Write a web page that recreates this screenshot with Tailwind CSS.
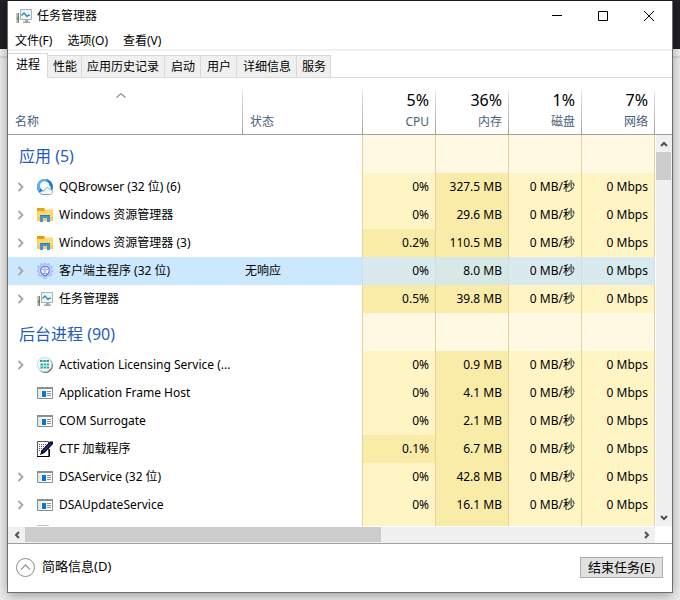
<!DOCTYPE html>
<html lang="zh-CN">
<head>
  <meta charset="UTF-8">
  <meta name="viewport" content="width=device-width, initial-scale=1.0">
  <title>任务管理器</title>
  <script src="https://cdn.jsdelivr.net/npm/@tailwindcss/browser@4"></script>
</head>
<body class="h-screen overflow-hidden px-[7px] pt-px pb-[7px] text-xs text-black font-['Noto_Sans','Noto_Sans_CJK_SC',sans-serif] bg-[linear-gradient(to_bottom,#201f25_49px,#f3f3f3_49px,#f3f3f3_56px,#dcdcdc_56px,#dcdcdc_58px,#efefef_58px)]">

  <!-- icons -->
  <svg class="hidden">
    <symbol id="i-taskmgr" viewBox="0 0 16 16">
      <path d="M0 5h3v10H0z" fill="#c4c4c4"/>
      <path d="M2 5h1v10H2z" fill="#777"/>
      <path d="M1 9h1v3H1z" fill="#58a55c"/>
      <path d="M4.500 1.500h11v10h-11z" fill="#fff" stroke="#a6a9ab"/>
      <path d="M5 2h10v9H5z" fill="none" stroke="#c9cccd" stroke-width=".5"/>
      <path d="M6 3h8v7H6z" fill="#e8f6fd"/>
      <path d="M5.500 7.500L8 5l3 3.500L12.500 7l1.500.500" fill="none" stroke="#2588bd" stroke-width="1.200"/>
      <path d="M9 12h3v1.500h2V15H7v-1.500h2z" fill="#a2a5a8"/>
    </symbol>
    <symbol id="i-qq" viewBox="0 0 16 16">
      <circle cx="8" cy="8" r="8" fill="#1d7bd6"/>
      <path d="M0 8A8 8 0 0 1 12 1C8 1.500 4 4 2.500 12.500A8 8 0 0 1 0 8z" fill="#58b2f4"/>
      <path d="M4 10a4.800 4.800 0 1 1 8.500-3.500c1 .5 1.500 2 1.200 3.500L8 13z" fill="#fff"/>
      <path d="M2.500 13.500c1.500-.500 3-2.500 4.800-1.500C8 8.500 11 7.500 12.500 10c2 0 3.300 1.500 3 3.500-.5 1.500-1.500 2-3 2H7c-2 0-3.500-.5-4.500-2z" fill="#f4f9fe" stroke="#7792b8" stroke-width=".8"/>
    </symbol>
    <symbol id="i-explorer" viewBox="0 0 16 16">
      <path d="M0 1h7l1.500 1.500H16V14H0z" fill="#ffd76a"/>
      <path d="M0 1h7l1 1.500-1.500 1.500H0z" fill="#e5a00d"/>
      <path d="M0 10h16v4H0z" fill="#fcc84c"/>
      <path d="M3 15V8h10v7h-3v-4H6v4z" fill="#3a96dd"/>
      <path d="M3 8h10v1H3z" fill="#2f78c4"/>
    </symbol>
    <symbol id="i-client" viewBox="0 0 16 16">
      <path d="M8 0l1.300 2L12 .5l.3 2.700 3 .3-1.500 2.500L16 8l-2.300 1.500.8 3-3 .2L10 14.500 8 16l-2-1.500-1.500-1.800-3-.2.8-3L0 8l2.200-2L.7 3.500l3-.3L4 .5 6.700 2z" fill="#c9d6fa" stroke="#8ea2ee" stroke-width=".7"/>
      <path d="M8 3.300c3 0 4.500 2 4.300 4.300-.2 2-2 4.400-4.300 5.400-2.300-1-4.100-3.400-4.300-5.400C3.500 5.300 5 3.300 8 3.300z" fill="#f2f6ff" stroke="#5c70e2" stroke-width="1.100"/>
      <path d="M5 6l2.200 1.200M11 6L8.800 7.200M8 4v5.500M6 10.500h4" fill="none" stroke="#7488ea" stroke-width=".9"/>
    </symbol>
    <symbol id="i-license" viewBox="0 0 16 16">
      <circle cx="8.400" cy="8.400" r="7.500" fill="#5f6676"/>
      <circle cx="7.600" cy="7.600" r="7.200" fill="#f8f9fc" stroke="#c3c8d4" stroke-width=".8"/>
      <path d="M3 4h9" stroke="#2aa39a" stroke-width="2" stroke-dasharray="2.600 .6"/>
      <path d="M4 7.500h8M4 10.500h8" stroke="#2aa39a" stroke-width="2" stroke-dasharray="2.200 .7"/>
      <path d="M3.500 6v6M6.500 9h5.500" stroke="#a9d5d2" stroke-width="1"/>
    </symbol>
    <symbol id="i-app" viewBox="0 0 16 16">
      <path d="M.5 2.500h15v11H.5z" fill="#fff" stroke="#8a8f94"/>
      <path d="M0 2h16v2H0z" fill="#8a8f94"/>
      <path d="M1 4h3v9H1z" fill="#e8e8e8"/>
      <path d="M5 6h4v6H5z" fill="#0078d7"/>
      <path d="M10 6.500h4M10 8.500h4M10 10.500h4" stroke="#8a8f94"/>
    </symbol>
    <symbol id="i-ctf" viewBox="0 0 16 16">
      <path d="M.5.500h11v15H.5z" fill="#fff" stroke="#555"/>
      <path d="M0 15.500h12.500V8" fill="none" stroke="#000"/>
      <path d="M2 3.500h8M2 5.500h7M2 7.500h5M2 9.500h3" stroke="#555" stroke-dasharray="1 1"/>
      <path d="M3 14l1.500-4.500L13 .5h3V3l-8.500 9z" fill="#000"/>
      <path d="M6 10.500L14.500 2" stroke="#1a2fd0" stroke-width="1.600"/>
    </symbol>
    <symbol id="i-blank" viewBox="0 0 16 16">
      <path d="M.5.500h11v15H.5z" fill="#fff" stroke="#c0c0c0"/>
    </symbol>
    <symbol id="i-right" viewBox="0 0 8 10">
      <path d="M1.500 1l4 4-4 4" fill="none" stroke="#a6a6a6" stroke-width="1.800"/>
    </symbol>
  </svg>

  <main class="flex h-full flex-col border border-t-0 border-[#6e6e6e] bg-white shadow-[0_3px_12px_rgba(0,0,0,0.35)]">
    <header class="flex h-[30px] shrink-0 items-center pl-2">
      <svg class="size-4"><use href="#i-taskmgr"/></svg>
      <h1 class="ml-[5px] grow">任务管理器</h1>
      <button class="flex h-full w-[46px] items-center justify-center" aria-label="最小化">
        <svg class="size-[10px]" viewBox="0 0 10 10"><path d="M0 4.500h10" stroke="#000"/></svg>
      </button>
      <button class="flex h-full w-[46px] items-center justify-center" aria-label="最大化">
        <svg class="size-[10px]" viewBox="0 0 10 10"><path d="M.5.500h9v9h-9z" fill="none" stroke="#000"/></svg>
      </button>
      <button class="flex h-full w-[46px] items-center justify-center" aria-label="关闭">
        <svg class="size-[10px]" viewBox="0 0 10 10"><path d="M0 0l10 10M10 0L0 10" stroke="#000"/></svg>
      </button>
    </header>

    <nav class="flex h-5 shrink-0 items-end gap-px border-b-2 border-[#f0f0f0]">
      <button class="px-[7px]">文件(F)</button>
      <button class="px-[7px]">选项(O)</button>
      <button class="px-[7px]">查看(V)</button>
    </nav>

    <div class="flex h-[27px] shrink-0 items-end" role="tablist">
      <button role="tab" aria-selected="true" class="h-[25px] border-t border-r border-[#d9d9d9] pr-[7px] pb-[2px] pl-2">进程</button>
      <button role="tab" class="h-[23px] border-y border-r border-[#d9d9d9] bg-[#f0f0f0] pr-1 pl-[5px]">性能</button>
      <button role="tab" class="h-[23px] border-y border-r border-[#d9d9d9] bg-[#f0f0f0] px-[5px]">应用历史记录</button>
      <button role="tab" class="h-[23px] border-y border-r border-[#d9d9d9] bg-[#f0f0f0] pr-[5px] pl-[6px]">启动</button>
      <button role="tab" class="h-[23px] border-y border-r border-[#d9d9d9] bg-[#f0f0f0] pr-[5px] pl-[6px]">用户</button>
      <button role="tab" class="h-[23px] border-y border-r border-[#d9d9d9] bg-[#f0f0f0] pr-[5px] pl-[6px]">详细信息</button>
      <button role="tab" class="h-[23px] border-y border-r border-[#d9d9d9] bg-[#f0f0f0] pr-1 pl-[5px]">服务</button>
      <div class="grow border-b border-[#d9d9d9]"></div>
    </div>

    <div class="flex min-h-0 grow">
      <div class="min-w-0 grow overflow-hidden">
        <table class="w-full table-fixed border-separate border-spacing-0">
          <colgroup>
            <col>
            <col class="w-[120px]">
            <col class="w-[73px]">
            <col class="w-[73px]">
            <col class="w-[73px]">
            <col class="w-[73px]">
          </colgroup>
          <thead class="text-[#4c607a]">
            <tr id="head"></tr>
          </thead>
          <tbody id="rows"></tbody>
        </table>
      </div>
      <div class="flex w-[17px] shrink-0 flex-col">
        <div class="h-[57px] shrink-0 border-b border-[#a0a0a0]"></div>
        <div class="ml-px flex grow flex-col bg-[#f0f0f0]">
          <button class="flex h-[17px] items-center justify-center" aria-label="向上滚动">
            <svg class="h-[6px] w-2" viewBox="0 0 8 6"><path d="M1 5l3-3 3 3" fill="none" stroke="#505050" stroke-width="2"/></svg>
          </button>
          <div class="mr-px h-7 bg-[#cdcdcd]"></div>
          <div class="grow"></div>
          <button class="flex h-[17px] items-center justify-center" aria-label="向下滚动">
            <svg class="h-[6px] w-2" viewBox="0 0 8 6"><path d="M1 1l3 3 3-3" fill="none" stroke="#505050" stroke-width="2"/></svg>
          </button>
        </div>
      </div>
    </div>

    <div class="mt-px mr-[17px] flex h-4 shrink-0 bg-[#f0f0f0]">
      <button class="flex w-[17px] items-center justify-center" aria-label="向左滚动">
        <svg class="h-2 w-[6px]" viewBox="0 0 6 8"><path d="M5 1L2 4l3 3" fill="none" stroke="#505050" stroke-width="2"/></svg>
      </button>
      <div class="mb-px w-[55%] bg-[#cdcdcd]"></div>
      <div class="grow"></div>
      <button class="flex w-[17px] items-center justify-center" aria-label="向右滚动">
        <svg class="h-2 w-[6px]" viewBox="0 0 6 8"><path d="M1 1l3 3-3 3" fill="none" stroke="#505050" stroke-width="2"/></svg>
      </button>
    </div>

    <footer class="flex h-[49px] shrink-0 items-center justify-between border-t border-[#a0a0a0] pr-[9px] pb-[2px] pl-2 text-[13px]">
      <button class="flex items-center gap-[7px]">
        <svg class="size-[19px]" viewBox="0 0 19 19" fill="none"><circle cx="9.500" cy="9.500" r="9" stroke="#8c8c8c"/><path d="M5 11.500l4.500-4.500 4.500 4.500" stroke="#a0a0a0" stroke-width="1.500"/></svg>
        简略信息(D)
      </button>
      <button class="h-[21px] border border-[#adadad] bg-[#e1e1e1] px-[7px] leading-[19px]">结束任务(E)</button>
    </footer>
  </main>

  <script>
    const columns = [
      { name: '名称', sort: true },
      { name: '状态' },
      { name: 'CPU', total: '5%' },
      { name: '内存', total: '36%' },
      { name: '磁盘', total: '1%' },
      { name: '网络', total: '7%' }
    ];

    const groups = [
      { title: '应用 (5)', rows: [
        { icon: 'qq', name: 'QQBrowser (32 位) (6)', cpu: '0%', mem: '327.5 MB', open: true },
        { icon: 'explorer', name: 'Windows 资源管理器', cpu: '0%', mem: '29.6 MB', open: true },
        { icon: 'explorer', name: 'Windows 资源管理器 (3)', cpu: '0.2%', mem: '110.5 MB', open: true },
        { icon: 'client', name: '客户端主程序 (32 位)', status: '无响应', cpu: '0%', mem: '8.0 MB', open: true, selected: true },
        { icon: 'taskmgr', name: '任务管理器', cpu: '0.5%', mem: '39.8 MB', open: true }
      ] },
      { title: '后台进程 (90)', rows: [
        { icon: 'license', name: 'Activation Licensing Service (...', cpu: '0%', mem: '0.9 MB', open: true },
        { icon: 'app', name: 'Application Frame Host', cpu: '0%', mem: '4.1 MB' },
        { icon: 'app', name: 'COM Surrogate', cpu: '0%', mem: '2.1 MB' },
        { icon: 'ctf', name: 'CTF 加载程序', cpu: '0.1%', mem: '6.7 MB' },
        { icon: 'app', name: 'DSAService (32 位)', cpu: '0%', mem: '42.8 MB', open: true },
        { icon: 'app', name: 'DSAUpdateService', cpu: '0%', mem: '16.1 MB', open: true },
        { icon: 'blank', name: '', cpu: '', mem: '', empty: true }
      ] }
    ];

    const line = '<span class="h-[43px] w-px bg-linear-to-b from-[#e6e6e6] to-[#a0a0a0]"></span>';

    document.getElementById('head').innerHTML = columns.map(c => {
      let body;
      if (c.total) {
        body = `<span class="flex grow flex-col pr-[6px] text-right"><span class="text-base leading-5 text-black">${c.total}</span><span class="pt-1 pb-1 leading-4">${c.name}</span></span>`;
      } else {
        const arrow = c.sort ? '<svg class="mx-auto mb-4 h-[5px] w-[10px]" viewBox="0 0 10 5"><path d="M.5 4.500L5 .800l4.500 3.700" fill="none" stroke="#7f8fa6" stroke-width="1.200"/></svg>' : '';
        body = `<span class="grow pr-4 pb-1 pl-[7px] text-left leading-4">${arrow}${c.name}</span>`;
      }
      return `<th class="h-[57px] border-b border-[#a0a0a0] p-0 align-bottom font-normal"><div class="flex items-end">${body}${line}</div></th>`;
    }).join('');

    function groupRow(g) {
      const cell = '<td class="border-r border-[#e6d29a] bg-[#fff9e4]"></td>';
      return `<tr class="h-[38px]">
        <td colspan="2" class="border-r border-[#e6d29a] py-0 pr-0 pl-[11px] text-base leading-5 text-[#1f5bbf]"><div class="pt-1">${g.title}</div></td>
        ${cell.repeat(4)}
      </tr>`;
    }

    function processRow(r) {
      let low = 'border-r border-[#e6d29a] bg-[#fff4c4] py-0 pr-[6px] pl-0 text-right';
      let high = 'border-r border-[#e6d29a] bg-[#f9eca8] py-0 pr-[6px] pl-0 text-right';
      let edge = 'border-r border-[#e6d29a] py-0 pr-0 pl-[2px]';
      if (r.selected) {
        low = 'border-r border-[#d5dde0] bg-[#d9eaee] py-0 pr-[6px] pl-0 text-right';
        high = 'border-r border-[#d5dde0] bg-[#d6e9e6] py-0 pr-[6px] pl-0 text-right';
        edge = 'border-r border-[#d5dde0] py-0 pr-0 pl-[2px]';
      }
      const cpuHigh = parseFloat(r.cpu) > 0;
      return `<tr class="h-7 whitespace-nowrap ${r.selected ? 'bg-[#cce8ff]' : ''}">
        <td class="py-0 pr-0 pl-[9px]">
          <div class="flex items-center">
            <svg class="mr-3 h-[10px] w-2 shrink-0">${r.open ? '<use href="#i-right"/>' : ''}</svg>
            <svg class="mr-[6px] size-4 shrink-0"><use href="#i-${r.icon}"/></svg>
            <span>${r.name}</span>
          </div>
        </td>
        <td class="${edge}">${r.status || ''}</td>
        <td class="${cpuHigh ? high : low}">${r.cpu}</td>
        <td class="${high}">${r.mem}</td>
        <td class="${low}">${r.empty ? '' : '0 MB/秒'}</td>
        <td class="${low}">${r.empty ? '' : '0 Mbps'}</td>
      </tr>`;
    }

    document.getElementById('rows').innerHTML = groups.map(g => groupRow(g) + g.rows.map(processRow).join('')).join('');
  </script>
</body>
</html>
